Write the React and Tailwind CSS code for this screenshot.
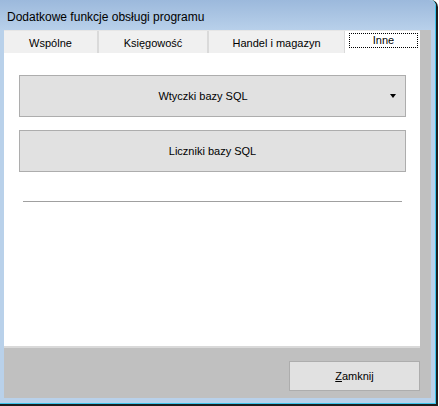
import React from 'react';

const tabs = [
  { label: 'Wspólne', w: 'w-[93px]' },
  { label: 'Księgowość', w: 'w-[108px]' },
  { label: 'Handel i magazyn', w: 'w-[135px]' },
];

const FormButton = ({ children, className = '' }) => (
  <div
    className={`flex items-center border border-[#adadad] bg-[#e1e1e1] text-[11px] leading-[13px] text-black ${className}`}
  >
    {children}
  </div>
);

const App = () => {
  return (
    <div className="w-[439px] h-[406px] bg-white font-['Liberation_Sans',Arial,sans-serif]">
      <div className="w-[438px] h-[406px] rounded-tr-[7px] border-r-2 border-b-2 border-[#1e1e1e]">
        <div className="h-full rounded-tr-[6px] border-r border-b border-[#3cc4ec] bg-[#b9d1ea] flex flex-col">
          {/* title bar */}
          <div className="h-[30px] shrink-0 rounded-tr-[6px] bg-gradient-to-b from-[#9cb9dc] to-[#b8d0ea] pl-[7px] pt-[10px] text-[12px] leading-[14px] text-black">
            Dodatkowe funkcje obsługi programu
          </div>

          {/* client area */}
          <div className="flex pl-[4px]">
            <div className="w-[427px] h-[368px] bg-[#c0c0c0] flex flex-col">
              <div className="w-[416px] flex flex-col">
                {/* tab strip */}
                <div className="h-[23px] flex gap-[2px] bg-[#dadada] border-t border-[#e6e6e6]">
                  {tabs.map((t) => (
                    <div
                      key={t.label}
                      className={`${t.w} h-[22px] bg-[#f0f0f0] flex items-center justify-center pt-[2px] text-[11px] leading-[13px] text-black`}
                    >
                      {t.label}
                    </div>
                  ))}
                  <div className="flex-1 -ml-[1px] h-[22px] bg-white pl-[4px] pr-[2px] pt-[2px]">
                    <div className="h-[15px] border border-dotted border-black flex items-center justify-center text-[11px] leading-[13px] text-black">
                      Inne
                    </div>
                  </div>
                </div>

                {/* tab page */}
                <div className="h-[295px] bg-white border-b-2 border-[#d9d9d9] pl-[15px] pt-[22px] flex flex-col">
                  <FormButton className="w-[387px] h-[42px]">
                    <span className="flex-1 text-center">Wtyczki bazy SQL</span>
                    <span className="w-[19px] pl-[4px] flex items-center">
                      <span className="block w-0 h-0 border-l-[3px] border-r-[3px] border-t-[4px] border-l-transparent border-r-transparent border-t-black" />
                    </span>
                  </FormButton>
                  <FormButton className="w-[387px] h-[42px] mt-[13px] justify-center">
                    Liczniki bazy SQL
                  </FormButton>
                  <div className="ml-[4px] mt-[29px] w-[379px] h-px bg-[#a0a0a0]" />
                </div>
              </div>

              {/* footer */}
              <div className="flex-1 flex items-end justify-end pr-[11px] pb-[7px]">
                <FormButton className="w-[131px] h-[30px] justify-center">
                  <span>
                    <span className="underline">Z</span>amknij
                  </span>
                </FormButton>
              </div>
            </div>
          </div>
        </div>
      </div>
    </div>
  );
};

export default App;
